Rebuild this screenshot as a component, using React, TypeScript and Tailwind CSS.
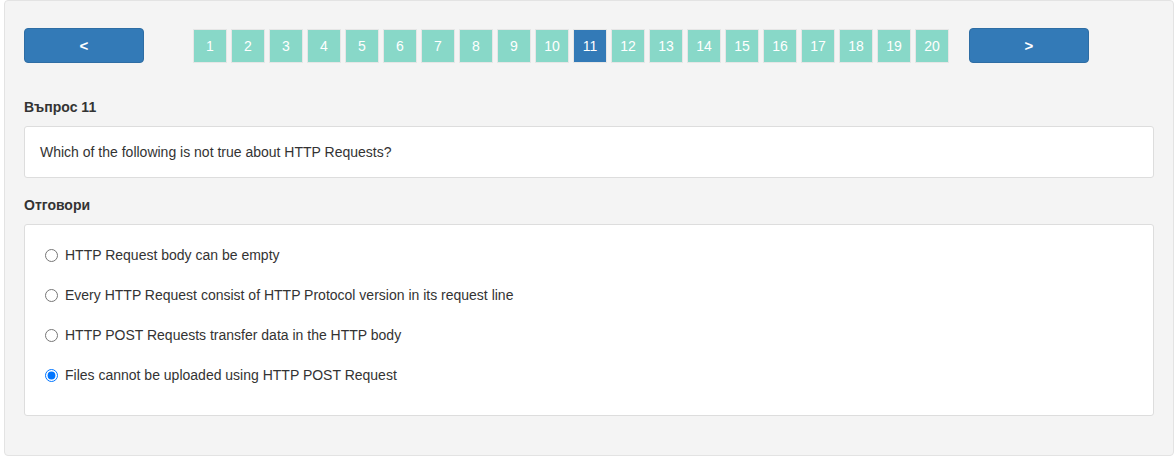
const pages = Array.from({ length: 20 }, (_, i) => i + 1);

const answers = [
  "HTTP Request body can be empty",
  "Every HTTP Request consist of HTTP Protocol version in its request line",
  "HTTP POST Requests transfer data in the HTTP body",
  "Files cannot be uploaded using HTTP POST Request",
];

export default function App() {
  const current = 11;
  const selected = 3;

  return (
    <div className="min-h-screen bg-white font-['Liberation_Sans',Arial,sans-serif] text-[14px] leading-[20px] text-[#333]">
      <div className="ml-[4px] w-[1170px] rounded-[4px] border border-[#e3e3e3] bg-[#f4f4f4] p-[19px]">
        {/* navigation */}
        <div className="mt-[8px] flex items-start">
          <button className="h-[35px] w-[120px] rounded-[4px] border border-[#2e6da4] bg-[#337ab7] text-[15px] font-bold text-white">
            &lt;
          </button>
          <div className="ml-[49px] mt-[1px] flex gap-[4px]">
            {pages.map((p) => (
              <div
                key={p}
                className={
                  p === current
                    ? "flex h-[34px] w-[34px] items-center justify-center border border-[#e6e6e6] bg-[#337ab7] text-[14px] text-white"
                    : "flex h-[34px] w-[34px] items-center justify-center border border-[#e6e6e6] bg-[#88d8c8] text-[14px] text-white"
                }
              >
                {p}
              </div>
            ))}
          </div>
          <button className="ml-[20px] h-[35px] w-[120px] rounded-[4px] border border-[#2e6da4] bg-[#337ab7] text-[15px] font-bold text-white">
            &gt;
          </button>
        </div>

        {/* question */}
        <h4 className="mt-[34px] font-bold">Въпрос 11</h4>
        <div className="mt-[9px] rounded-[3px] border border-[#ddd] bg-white px-[15px] py-[15px]">
          Which of the following is not true about HTTP Requests?
        </div>

        {/* answers */}
        <h4 className="mt-[17px] font-bold">Отговори</h4>
        <div className="mb-[20px] mt-[9px] flex flex-col gap-[20px] rounded-[3px] border border-[#ddd] bg-white px-[20px] pb-[30px] pt-[20px]">
          {answers.map((a, i) => (
            <label key={i} className="flex items-center gap-[7px]">
              <input
                type="radio"
                name="answer"
                readOnly
                checked={i === selected}
                className="m-0 h-[13px] w-[13px]"
              />
              <span>{a}</span>
            </label>
          ))}
        </div>
      </div>
    </div>
  );
}
